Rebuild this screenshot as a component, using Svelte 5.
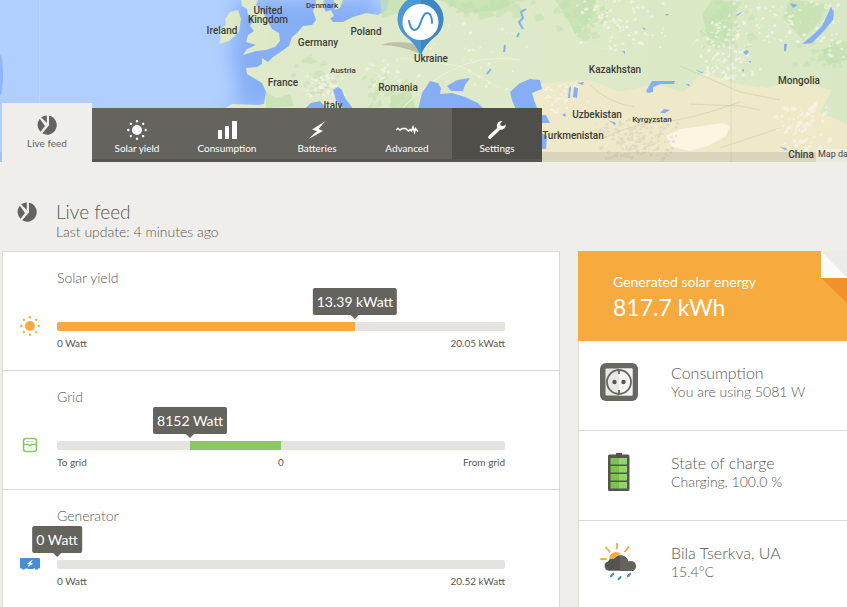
<script lang="ts">
    const tabs = [
        { name: "Live feed", icon: "live" },
        { name: "Solar yield", icon: "sun" },
        { name: "Consumption", icon: "bars" },
        { name: "Batteries", icon: "bolt" },
        { name: "Advanced", icon: "wave" },
        { name: "Settings", icon: "wrench" },
    ];

    let active = "Live feed";

    const feeds = [
        { name: "Solar yield", icon: "sun", color: "#f7aa3e", value: "13.39 kWatt", at: 66.5, from: 0, to: 66.5, min: "0 Watt", mid: "", max: "20.05 kWatt" },
        { name: "Grid", icon: "grid", color: "#8bc865", value: "8152 Watt", at: 29.7, from: 29.7, to: 50, min: "To grid", mid: "0", max: "From grid" },
        { name: "Generator", icon: "generator", color: "#478fd0", value: "0 Watt", at: 0, from: 0, to: 0, min: "0 Watt", mid: "", max: "20.52 kWatt" },
    ];

    const stats = [
        { name: "Consumption", text: "You are using 5081 W", icon: "socket" },
        { name: "State of charge", text: "Charging, 100.0 %", icon: "battery" },
        { name: "Bila Tserkva, UA", text: "15.4°C", icon: "weather" },
    ];

    const rays = [0, 45, 90, 135, 180, 225, 270, 315];

    const countries = [
        { name: "Ireland", x: 222, y: 34 },
        { name: "United", x: 268, y: 14 },
        { name: "Kingdom", x: 268, y: 23 },
        { name: "Denmark", x: 322, y: 8, small: true },
        { name: "Poland", x: 366, y: 35 },
        { name: "Germany", x: 318, y: 46 },
        { name: "Austria", x: 343, y: 73, small: true },
        { name: "France", x: 283, y: 86 },
        { name: "Romania", x: 398, y: 91 },
        { name: "Italy", x: 333, y: 109 },
        { name: "Ukraine", x: 431, y: 62 },
        { name: "Kazakhstan", x: 615, y: 73 },
        { name: "Mongolia", x: 799, y: 84 },
        { name: "Uzbekistan", x: 597, y: 118 },
        { name: "Kyrgyzstan", x: 652, y: 122, small: true },
        { name: "Turkmenistan", x: 573, y: 139 },
        { name: "China", x: 801, y: 158 },
    ];

    // same pseudo random terrain on every load
    let seed = 7;
    function rand() {
        seed = (seed * 16807) % 2147483647;
        return seed / 2147483647;
    }

    function scatter(n: number, x: number, y: number, w: number, h: number, size: number) {
        let d = "";
        for (let i = 0; i < n; i++) {
            const s = size * (0.4 + rand());
            const px = x + (rand() + rand()) * w * 0.5;
            const py = y + rand() * h;
            d += `M${px.toFixed(1)} ${py.toFixed(1)}l${s.toFixed(1)} ${(-s * rand()).toFixed(1)} ${(s * rand()).toFixed(1)} ${s.toFixed(1)} ${(-s * 1.4).toFixed(1)} ${(s * 0.4).toFixed(1)}z`;
        }
        return d;
    }

    const snow =
        scatter(70, 300, 74, 46, 22, 2) +
        scatter(30, 362, 60, 40, 30, 2) +
        scatter(90, 570, 0, 100, 50, 2) +
        scatter(120, 690, 20, 70, 60, 2) +
        scatter(70, 725, 0, 110, 42, 2) +
        scatter(34, 815, 0, 30, 60, 2) +
        scatter(60, 770, 105, 60, 42, 3) +
        scatter(50, 530, 84, 60, 28, 2) +
        scatter(40, 390, 20, 150, 70, 2);
    const forest =
        scatter(40, 440, 0, 100, 16, 5) +
        scatter(40, 545, 0, 70, 38, 5) +
        scatter(36, 690, 0, 65, 46, 5) +
        scatter(26, 285, 55, 45, 40, 4) +
        scatter(24, 350, 75, 60, 32, 4) +
        scatter(24, 790, 40, 57, 25, 4);
    const rock = scatter(200, 590, 120, 90, 38, 2) + scatter(40, 300, 76, 44, 18, 2);
</script>

{#snippet icon(name: string)}
    {#if name === "live"}
        <svg viewBox="0 0 20 20" width="20" height="20" fill="currentColor" aria-hidden="true">
            <path d="M9.800 8V.5a9.500 9.500 0 0 0-5.600 2z" />
            <path d="M2.800 3.800a9.500 9.500 0 0 0 .8 13L8 11z" />
            <path d="M12 .8a9.500 9.500 0 1 1-6.800 17.400L12 10.500z" />
        </svg>
    {:else if name === "sun"}
        <svg viewBox="0 0 20 20" width="20" height="20" fill="currentColor" aria-hidden="true">
            <circle cx="10" cy="10" r="5" />
            {#each rays as ray}
                <circle cx="10" cy="1.300" r="1.200" transform="rotate({ray} 10 10)" />
            {/each}
        </svg>
    {:else if name === "bars"}
        <svg viewBox="0 0 20 20" width="20" height="20" fill="currentColor" aria-hidden="true">
            <rect x="1" y="10" width="4" height="9" rx=".5" />
            <rect x="8" y="6" width="4" height="13" rx=".5" />
            <rect x="15" y="1" width="5" height="18" rx=".5" />
        </svg>
    {:else if name === "bolt"}
        <svg viewBox="0 0 20 20" width="20" height="20" fill="currentColor" aria-hidden="true">
            <path d="M18.500 1 5 9.500l5 1.500-8.500 8L16 11l-4.500-2z" />
        </svg>
    {:else if name === "wave"}
        <svg viewBox="0 0 24 20" width="24" height="20" fill="none" stroke="currentColor" stroke-width="1.500" aria-hidden="true">
            <path d="M1 10l2-1.500L5 10l2.500-1.500 3 0 3 2.500 1.500-1.500 1.500 1.500 1.500-4 1.500 5 1-3.500 2.500 3" />
        </svg>
    {:else if name === "wrench"}
        <svg viewBox="0 0 20 20" width="20" height="20" aria-hidden="true">
            <path d="M2.800 17.200 12 8.500" stroke="currentColor" stroke-width="3.400" stroke-linecap="round" />
            <path d="M15.500 1.200a5 5 0 0 0-5.500 6.800 5 5 0 0 0 8.800-3.500L16 6.200l-2.500-.7-.2-2.500z" fill="currentColor" />
        </svg>
    {:else if name === "grid"}
        <svg viewBox="0 0 20 20" width="20" height="20" fill="none" stroke="currentColor" stroke-width="1.600" aria-hidden="true">
            <rect x="3.500" y="3.500" width="13" height="13" rx="2.500" />
            <path d="M3.500 9.500h5l1 1h1l1-1h5" />
            <path d="M6 6.500h8M7.500 13h5" stroke-width="1" opacity=".5" />
        </svg>
    {:else if name === "generator"}
        <svg viewBox="0 0 20 20" width="20" height="20" aria-hidden="true">
            <path d="M1 4h18q1 0 1 1v8.500q0 1-1 1h-1v1h-3v-1h-2v.600H8v-.6H5v1H2v-1H1q-1 0-1-1V5q0-1 1-1z" fill="currentColor" />
            <path d="M12.800 5.500 7 9.700l2.300.6-2 3L13 9.800l-2-.7z" fill="#fff" />
        </svg>
    {:else if name === "socket"}
        <svg viewBox="0 0 38 38" width="38" height="38" aria-hidden="true">
            <rect width="38" height="38" rx="6" fill="#686863" />
            <rect x="5.500" y="5.500" width="27" height="27" rx="1" fill="#e9e8e5" />
            <path d="M19 5.500h13.500v27H19z" fill="#f7f6f4" />
            <circle cx="19" cy="19" r="12" fill="none" stroke="#686863" stroke-width="1.800" />
            <path d="M19 7v4M19 27v4" stroke="#686863" stroke-width="1.800" />
            <circle cx="14.500" cy="19" r="2.200" fill="#55544f" />
            <circle cx="23.500" cy="19" r="2.200" fill="#55544f" />
        </svg>
    {:else if name === "battery"}
        <svg viewBox="0 0 38 38" width="38" height="38" aria-hidden="true">
            <path d="M16 0h6v1.500h6q1.500 0 1.500 1.500v33.500q0 1.500-1.500 1.500H9.500Q8 38 8 36.500V3q0-1.500 1.500-1.500H16z" fill="#55544f" />
            {#each [5, 13, 21, 29] as y}
                <rect x="10.500" {y} width="9" height="6.500" fill="#7bc156" />
                <rect x="19" {y} width="8" height="6.500" fill="#91d36c" />
            {/each}
        </svg>
    {:else if name === "weather"}
        <svg viewBox="0 0 38 38" width="38" height="38" aria-hidden="true">
            <circle cx="16" cy="16" r="7" fill="#f7aa3e" />
            <path d="M1 16h5M6 4.500l3.500 4M17 .500v5M28.500 4 25 8.500" stroke="#f7aa3e" stroke-width="1.800" stroke-linecap="round" />
            <path d="M9 28a5 5 0 0 1-1-9.800 5 5 0 0 1 6-2.700 8 8 0 0 1 14.500 3A5 5 0 0 1 33 28z" fill="#55544f" stroke="#fff" stroke-width=".5" />
            <path d="M20 13a8 8 0 0 1 8.500 5.500A5 5 0 0 1 33 28H20z" fill="#64635e" />
            <path d="M10.500 34q-.5-2 3-4 .5 3-3 4zM18 37q-.5-2 3-4 .5 3-3 4zM27.500 34q-.5-2 3-4 .5 3-3 4z" fill="#478fd0" stroke="#478fd0" />
        </svg>
    {/if}
{/snippet}

<header>
    <svg class="map" viewBox="0 0 847 162" preserveAspectRatio="xMidYMid slice" role="img" aria-label="Map">
        <defs>
            <filter id="shelf" x="-30%" y="-30%" width="160%" height="160%">
                <feGaussianBlur stdDeviation="9" />
            </filter>
            <filter id="soft">
                <feGaussianBlur stdDeviation="0.5" />
            </filter>
            <linearGradient id="land">
                <stop offset="0" stop-color="#dfeacb" />
                <stop offset="0.6" stop-color="#dde9c7" />
                <stop offset="1" stop-color="#d8e8c5" />
            </linearGradient>
        </defs>
        <rect width="847" height="162" fill="#b0cffe" />
        <path d="M236 0h142v20L300 60l-30 48h-44l14-12-8-36z" fill="#7ba6f4" opacity=".8" filter="url(#shelf)" />
        <ellipse cx="0" cy="75" rx="3" ry="20" fill="#8fb5fa" />
        <g filter="url(#soft)">
            <g fill="url(#land)">
                <path d="M241 0h17l-2 5 7 7 4 8 5 9 7 4 1 8-5 6-9 3-10 1-13 4 4-6 9-4-10-3 2-7 6-4-4-5 4-7-6-4-1-6-5-3z" />
                <path d="M230 12l8-2 3 9-2 13-10 9-10 3 2-6-3-8 8-5-1-6z" />
                <path d="M222 110l10-6 26 1 6-1 2-12-4-9-15-9-1-6 11-1 5-3v-6l6 4 5-5 6-4 10-7 3-9 6-5 5-6 9-1 4-5-3-9 3-7V0h8l-1 6 4 8 6 8 10 0 10-5 13-4 12 2 9-5 2-10h469v162H222z" />
                <path d="M325 12l6-2 3 6-5 3zM334 0h9l-3 8-5 2z" />
            </g>
            <path d="M530 84l60-4 30 12 35-8 28 8 20-20 34 12 30 4 25-8 40 10-12 22 27 12v38H540v-40z" fill="#f1e9c9" opacity=".85" />
            <path d="M666 136l14-7 22-3 20-3 8 3-4 10-16 9-20 6-18-4z" fill="#fbf5e2" />
            <path d="M712 0l30 2-12 16-2 26-20-6-6-24zM790 0l38 4-7 16-18 20-20-22zM822 50l25-10v20l-20 4zM440 0h80l-20 10-35 3zM555 0l40 0-5 20-15 14-8-16zM380 0h30l-8 12-20 6z" fill="#c0e0ae" opacity=".65" />
            <path d="M266 92l10 6 14-4 4 12-28 2zM390 96l20-6 6 18h-24z" fill="#c0e0ae" opacity=".7" />
            <path d={forest} fill="#bde0ab" opacity=".5" />
            <path d={rock} fill="#c9c7bb" opacity=".4" />
            <path d={snow} fill="#fbf9ee" opacity=".6" />
            <path d="M600 140q30-16 60-18t80-20M680 66l60 26 40 8M590 85q18 18 45 22M690 104l50 2 20 4M720 148l60-20" stroke="#c4caa4" stroke-width="1" fill="none" opacity=".5" />
            <path d="M370 150q70-105 150-90M400 58l60 8 40 22" stroke="#eef0da" stroke-width="1" fill="none" />
            <g fill="#86aef6">
                <path d="M303 110l8-7 9-2 8 9zM333 90l5-3 4 3 3 8 9 12h-10l-8-10z" />
                <path d="M418 110l4-17 8-12 8 2 3 5-1 6 12-1 13 4 13 6 7 7z" />
                <path d="M447 86l10-6 13-2-5 7-2 6-12 0z" />
                <path d="M510 92l10-9 10-4 10 1 2 9-10 4 2 7 4 10h-22l-4-10z" />
                <path d="M542 115l4 0 4 8h-8zM542 133l5 3-1 13h-4z" />
                <path d="M569 88l2-2-1 12h-2zM574 87l4 1-1 10-4-1zM577 83l7-1-1 3zM562 115l3-2 1 4zM608 120l8 3-1 2z" />
                <path d="M646 91l6-10h23l-1 3-13 0-8 3 0 5-5 1z" />
                <path d="M831 7l3 5-1 8-10 12-11 11-10 1 12-10 8-8zM784 44l3 0-1 7h-2zM790 3l8 2-5 3zM736 15l9-5-8 6z" />
                <path d="M660 113l4-4 6 1-5 3zM743 52l4-2 2 2-3 3zM748 61h3v2zM741 70l3-1v3zM695 69l9 4-3 0zM780 147l6 1 1 3zM686 84l3 0 1 3zM622 51h3v3zM642 27l4 2-2 1zM665 14l4 0-2 2z" />
            </g>
            <path d="M526 9l-5 3 2 6-4 4 4 7M519 33l-2 4M505 45l-1 7M491 69l-4 5" stroke="#86aef6" stroke-width="2" fill="none" />
        </g>
        <path d="M731 0v162" stroke="#cdd3bd" stroke-width="1" opacity=".6" />
        <path d="M39.500 0v162" stroke="#bed7fd" />
        <rect y="152" width="847" height="10" fill="#8f8f88" opacity=".22" />
        <rect x="816" y="149" width="31" height="13" fill="#f3f1e8" opacity=".7" />
        {#each countries as country}
            <text class="country" class:small={country.small} x={country.x} y={country.y}>{country.name}</text>
        {/each}
        <text class="credit" x="818" y="157">Map data</text>
        <path d="M421 54q-22-9-40-9 14-6 38 0z" fill="#776666" opacity=".3" filter="url(#soft)" />
        <path d="M420 55q-4-11-16-20a23 23 0 1 1 33 0q-13 9-17 20z" fill="#4a98d6" />
        <path d="M421 55V0h12a23 23 0 0 1 4 35q-12 9-16 20z" fill="#3f86c2" />
        <circle cx="420.500" cy="22" r="18" fill="#fff" />
        <path d="M409 21c1 6 3 9 6 9 6 0 6-17 12-17 3 0 5 4 5 10" fill="none" stroke="#4590cc" stroke-width="2" stroke-linecap="round" />
    </svg>

    <nav>
        {#each tabs as tab}
            <a
                href="#{tab.icon}"
                class="tab"
                class:active={tab.name === active}
                class:dark={tab.name === "Settings"}
                on:click|preventDefault={() => (active = tab.name)}
            >
                {@render icon(tab.icon)}
                <span>{tab.name}</span>
            </a>
        {/each}
    </nav>
</header>

<main>
    <div class="heading">
        {@render icon("live")}
        <div>
            <h1>Live feed</h1>
            <p>Last update: 4 minutes ago</p>
        </div>
    </div>

    <div class="columns">
        <section class="feeds">
            {#each feeds as feed}
                <div class="feed">
                    <h2>{feed.name}</h2>
                    <div class="line">
                        <span class="feed-icon" style="color: {feed.color}">
                            {@render icon(feed.icon)}
                        </span>
                        <div class="track">
                            <div
                                class="fill"
                                class:start={feed.from === 0}
                                style="margin-left: {feed.from}%; width: {feed.to - feed.from}%; background: {feed.color}"
                            ></div>
                            <div class="tip" style="left: {feed.at}%">{feed.value}</div>
                        </div>
                    </div>
                    <div class="scale">
                        <span>{feed.min}</span>
                        <span>{feed.mid}</span>
                        <span class="max">{feed.max}</span>
                    </div>
                </div>
            {/each}
        </section>

        <aside>
            <div class="total">
                <p>Generated solar energy</p>
                <strong>817.7 kWh</strong>
                <svg class="fold" viewBox="0 0 26 54" width="26" height="54" aria-hidden="true">
                    <path d="M0 0h26v27H0z" fill="#fbfbf9" />
                    <path d="M0 0h26v27z" fill="#ececea" />
                    <path d="M0 27h26v25z" fill="#f0932c" />
                </svg>
            </div>
            {#each stats as stat}
                <div class="stat">
                    {@render icon(stat.icon)}
                    <div>
                        <h3>{stat.name}</h3>
                        <p>{stat.text}</p>
                    </div>
                </div>
            {/each}
        </aside>
    </div>
</main>

<style>
    :global(body) {
        background: #f0eeea;
        color: #595853;
        font-family: Lato, "Open Sans", sans-serif;
    }
    h1,
    h2,
    h3,
    p {
        margin: 0;
        font-weight: 300;
    }
    svg {
        display: block;
        flex: none;
    }

    header {
        display: grid;
    }
    .map {
        grid-area: 1 / 1;
        width: 100%;
        height: 162px;
    }
    .country {
        font: 500 10px Roboto, sans-serif;
        fill: #3d3d3a;
        text-anchor: middle;
    }
    .small {
        font-size: 8px;
    }
    .credit {
        font: 9px Roboto, sans-serif;
        fill: #444;
    }

    nav {
        grid-area: 1 / 1;
        align-self: end;
        display: flex;
        align-items: flex-end;
        padding-left: 2px;
    }
    .tab {
        display: flex;
        flex-direction: column;
        align-items: center;
        gap: 2px;
        box-sizing: border-box;
        width: 90px;
        height: 54px;
        padding-top: 12px;
        background: #64635e;
        border-bottom: 3px solid #575651;
        color: white;
        font-size: 10px;
        line-height: 12px;
        text-decoration: none;
    }
    .tab.dark {
        background: #4f4e49;
    }
    .tab.active {
        height: 59px;
        border-color: #f0eeea;
        background: #f0eeea;
        color: #64635e;
    }

    .heading {
        display: flex;
        gap: 19px;
        padding: 39px 17px 10px;
    }
    .heading svg {
        margin-top: 1px;
        color: #64635e;
    }
    .heading h1 {
        font-size: 19px;
        line-height: 22px;
    }
    .heading p {
        font-size: 14px;
        line-height: 18px;
    }

    .columns {
        display: grid;
        grid-template-columns: minmax(0, 1fr) 269px;
        align-items: start;
        gap: 18px;
        padding-left: 2px;
    }
    .feeds {
        background: white;
        border: 1px solid #dad9d6;
        border-bottom: none;
    }
    .feed {
        padding: 17px 54px 21px 17px;
    }
    .feed + .feed {
        border-top: 1px solid #dad9d6;
    }
    .feed h2 {
        padding-left: 37px;
        font-size: 14px;
        line-height: 18px;
    }
    .line {
        display: flex;
        align-items: center;
        gap: 17px;
        padding-top: 29px;
    }
    .track {
        position: relative;
        flex: 1;
        height: 9px;
        border-radius: 2px;
        background: #e4e3e0;
    }
    .fill {
        height: 100%;
    }
    .start {
        border-radius: 2px 0 0 2px;
    }
    .tip {
        position: absolute;
        bottom: 16px;
        padding: 0 4px;
        border-radius: 2px;
        background: #64635e;
        color: white;
        font-size: 14px;
        line-height: 27px;
        white-space: nowrap;
        transform: translateX(-50%);
    }
    .tip::after {
        content: "";
        position: absolute;
        top: 100%;
        left: 50%;
        margin-left: -4px;
        border: 4px solid transparent;
        border-top-color: #64635e;
    }
    .scale {
        display: grid;
        grid-template-columns: 1fr auto 1fr;
        padding: 1px 0 0 37px;
        font-size: 10px;
        line-height: 12px;
    }
    .max {
        text-align: right;
    }

    .total {
        position: relative;
        padding: 21px 35px 19px;
        background: #f7aa3e;
        color: white;
    }
    .total p {
        font-size: 14px;
        font-weight: 400;
        line-height: 20px;
    }
    .total strong {
        display: block;
        font-size: 23px;
        font-weight: 400;
        line-height: 30px;
    }
    .fold {
        position: absolute;
        top: 0;
        right: 0;
    }
    .stat {
        display: flex;
        gap: 33px;
        padding: 22px 21px 29px;
        background: white;
        border-left: 1px solid #dad9d6;
    }
    .stat + .stat {
        border-top: 1px solid #dad9d6;
    }
    .stat h3 {
        font-size: 16px;
        line-height: 20px;
    }
    .stat p {
        font-size: 14px;
        line-height: 18px;
    }
</style>
